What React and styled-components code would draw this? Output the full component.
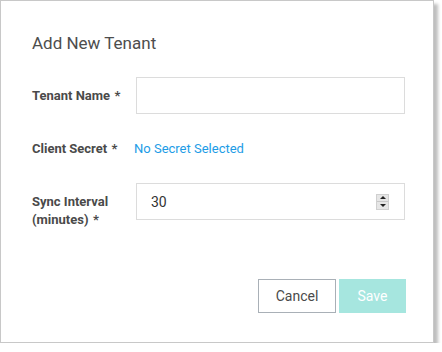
import React from "react";
import styled, { createGlobalStyle } from "styled-components";

const GlobalStyle = createGlobalStyle`
  body {
    margin: 0;
    background: #ffffff;
    font-family: Roboto, "Liberation Sans", sans-serif;
  }
`;

const Dialog = styled.div`
  box-sizing: border-box;
  width: 434px;
  height: 343px;
  border: 1px solid #c8c8c8;
  background: #ffffff;
  box-shadow: 4px 4px 3px rgba(0, 0, 0, 0.25);
  padding: 31px 27px 0 31px;
  display: flex;
  flex-direction: column;
`;

const Title = styled.h2`
  margin: 0;
  font-size: 17px;
  font-weight: 400;
  line-height: 22px;
  color: #4d4d4d;
`;

const Form = styled.div`
  margin-top: 23px;
  display: grid;
  grid-template-columns: 104px 269px;
`;

const Label = styled.label`
  font-size: 13px;
  font-weight: 700;
  color: #4a4a4a;
  line-height: 18px;
  align-self: ${(props) => props.$align || "center"};
  padding-top: ${(props) => props.$top || 0}px;
  padding-right: 8px;
  margin-top: ${(props) => props.$mt || 0}px;
  white-space: pre-line;
`;

const Field = styled.div`
  margin-top: ${(props) => props.$mt || 0}px;
`;

const Input = styled.div`
  box-sizing: border-box;
  height: ${(props) => props.$h || 37}px;
  border: 1px solid #dcdcdc;
  background: #ffffff;
  display: flex;
  align-items: center;
  padding: 0 15px 0 14px;
  font-size: 14px;
  color: #333333;
`;

const Value = styled.span`
  flex: 1;
`;

const Link = styled.a`
  display: block;
  font-size: 13px;
  color: #1d9ce6;
  line-height: 20px;
  padding-top: 1px;
  text-decoration: none;
  margin-left: -2px;
  cursor: pointer;
`;

const Spinner = styled.div`
  width: 13px;
  height: 16px;
  background: #e6e6e6;
  border: 1px solid #d0d0d0;
  box-sizing: border-box;
  display: flex;
  flex-direction: column;
`;

const SpinHalf = styled.div`
  flex: 1;
  display: flex;
  align-items: center;
  justify-content: center;
  border-top: ${(props) => (props.$down ? "1px solid #c8c8c8" : "none")};
`;

const Arrow = styled.div`
  width: 0;
  height: 0;
  border-left: 3px solid transparent;
  border-right: 3px solid transparent;
  ${(props) =>
    props.$down
      ? "border-top: 3px solid #222;"
      : "border-bottom: 3px solid #222;"}
`;

const Footer = styled.div`
  margin-top: auto;
  margin-bottom: 29px;
  display: flex;
  justify-content: flex-end;
  gap: 3px;
`;

const Button = styled.button`
  box-sizing: border-box;
  height: 34px;
  width: ${(props) => props.$w}px;
  font-family: Roboto, "Liberation Sans", sans-serif;
  font-size: 14px;
  border: 1px solid ${(props) => (props.$primary ? "#a6e6df" : "#a9b0b7")};
  background: ${(props) => (props.$primary ? "#a6e6df" : "#ffffff")};
  color: ${(props) => (props.$primary ? "#ffffff" : "#4a4a4a")};
  padding: 0;
  cursor: pointer;
`;

const App = () => (
  <>
    <GlobalStyle />
    <Dialog>
      <Title>Add New Tenant</Title>
      <Form>
        <Label>{"Tenant Name\u2004*"}</Label>
        <Field>
          <Input />
        </Field>

        <Label $mt={24}>{"Client Secret\u2004*"}</Label>
        <Field $mt={24}>
          <Link>No Secret Selected</Link>
        </Field>

        <Label $mt={24} $align="start" $top={10}>
          {"Sync Interval\n(minutes)\u2004*"}
        </Label>
        <Field $mt={24}>
          <Input $h={37}>
            <Value>30</Value>
            <Spinner>
              <SpinHalf>
                <Arrow />
              </SpinHalf>
              <SpinHalf $down>
                <Arrow $down />
              </SpinHalf>
            </Spinner>
          </Input>
        </Field>
      </Form>
      <Footer>
        <Button $w={78}>Cancel</Button>
        <Button $w={67} $primary>
          Save
        </Button>
      </Footer>
    </Dialog>
  </>
);

export default App;
